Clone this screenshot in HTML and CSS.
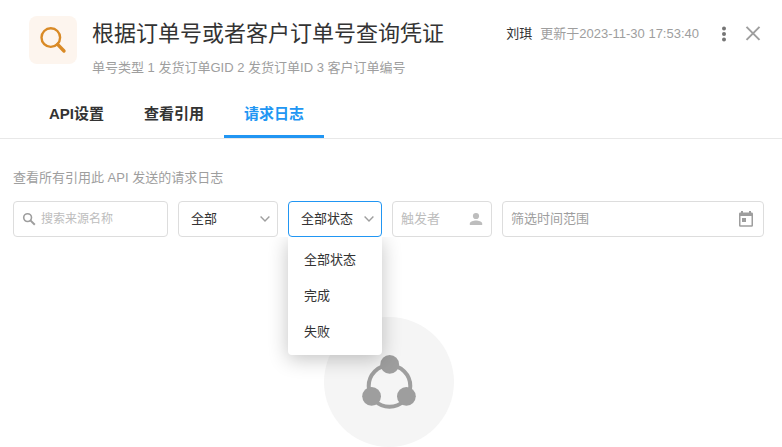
FILE: index.html
```html
<!DOCTYPE html>
<html lang="zh-CN">
<head>
    <meta charset="UTF-8">
    <meta name="viewport" content="width=device-width, initial-scale=1.0">
    <title>请求日志</title>
    <link rel="stylesheet" href="styles.css">
</head>
<body>
    <!-- Header -->
    <header class="header">
        <div class="api-icon">
            <svg viewBox="0 0 48 48" width="48" height="48" fill="none" stroke="#d98a26">
                <circle cx="21.8" cy="21.6" r="9.3" stroke-width="2.4"/>
                <path d="M28.6 28.4L35 35" stroke-width="3.4" stroke-linecap="round"/>
            </svg>
        </div>
        <div class="header-text">
            <h1 class="title">根据订单号或者客户订单号查询凭证</h1>
            <p class="subtitle">单号类型 1 发货订单GID 2 发货订单ID 3 客户订单编号</p>
        </div>
        <div class="header-meta">
            <span class="user">刘琪</span>
            <span class="updated">更新于2023-11-30 17:53:40</span>
            <button class="icon-button more" type="button" aria-label="更多">
                <svg viewBox="0 0 16 16" width="16" height="16" fill="#757575">
                    <circle cx="8" cy="2.4" r="2"/>
                    <circle cx="8" cy="8" r="2"/>
                    <circle cx="8" cy="13.6" r="2"/>
                </svg>
            </button>
            <button class="icon-button" type="button" aria-label="关闭">
                <svg viewBox="0 0 16 16" width="16" height="16" fill="none" stroke="#9e9e9e" stroke-width="2">
                    <path d="M1.5 0.9L14.5 13.9M14.5 0.9L1.5 13.9"/>
                </svg>
            </button>
        </div>
    </header>

    <!-- Tabs -->
    <nav class="tabs">
        <a class="tab" href="#settings">API设置</a>
        <a class="tab" href="#references">查看引用</a>
        <a class="tab active" href="#logs">请求日志</a>
    </nav>

    <main class="content">
        <p class="description">查看所有引用此 API 发送的请求日志</p>

        <!-- Filters -->
        <form class="filters">
            <label class="field search-field">
                <svg viewBox="0 0 14 14" width="14" height="14" fill="none" stroke="#9e9e9e">
                    <circle cx="5.6" cy="5.6" r="3.9" stroke-width="1.6"/>
                    <path d="M8.4 8.4L12.8 12.8" stroke-width="2"/>
                </svg>
                <input type="text" placeholder="搜索来源名称" aria-label="搜索来源名称">
            </label>
            <div class="field select-field">
                <select aria-label="类型">
                    <option>全部</option>
                </select>
                <svg viewBox="0 0 10 10" width="10" height="10" fill="none" stroke="#9e9e9e" stroke-width="1.4">
                    <path d="M0.6 2.6L5 7L9.4 2.6"/>
                </svg>
            </div>
            <div class="field select-field status-field">
                <select aria-label="状态">
                    <option>全部状态</option>
                    <option>完成</option>
                    <option>失败</option>
                </select>
                <svg viewBox="0 0 10 10" width="10" height="10" fill="none" stroke="#9e9e9e" stroke-width="1.4">
                    <path d="M0.6 2.6L5 7L9.4 2.6"/>
                </svg>
                <div class="menu">
                    <button class="menu-item" type="button">全部状态</button>
                    <button class="menu-item" type="button">完成</button>
                    <button class="menu-item" type="button">失败</button>
                </div>
            </div>
            <label class="field user-field">
                <input type="text" placeholder="触发者" aria-label="触发者">
                <svg viewBox="0 0 14 14" width="14" height="14" fill="#bdbdbd">
                    <circle cx="7" cy="4" r="3.1"/>
                    <path d="M0.8 13V11.4C0.8 9.4 4.6 8.4 7 8.4S13.2 9.4 13.2 11.4V13Z"/>
                </svg>
            </label>
            <label class="field date-field">
                <input type="text" placeholder="筛选时间范围" aria-label="筛选时间范围">
                <svg viewBox="0 0 16 16" width="16" height="16" fill="#9e9e9e">
                    <path fill-rule="evenodd" d="M3 0H5V1.4H11V0H13V1.4H13.6Q15 1.4 15 2.8V14.4Q15 15.8 13.6 15.8H2.4Q1 15.8 1 14.4V2.8Q1 1.4 2.4 1.4H3ZM2.5 5V14.3H13.5V5Z"/>
                    <rect x="4" y="7" width="4" height="4"/>
                </svg>
            </label>
        </form>

        <!-- Empty state -->
        <div class="empty-state">
            <svg viewBox="0 0 56 56" width="56" height="56" fill="#9e9e9e">
                <circle cx="28.5" cy="32" r="20.8" fill="none" stroke="#9e9e9e" stroke-width="4"/>
                <circle cx="28.7" cy="10.4" r="9.4"/>
                <circle cx="10.6" cy="42.3" r="9.4"/>
                <circle cx="45.4" cy="42.3" r="9.4"/>
            </svg>
        </div>
    </main>
</body>
</html>
```
FILE: styles.css
```css
/* Reset and base styles */
* {
    margin: 0;
    padding: 0;
    box-sizing: border-box;
}

body {
    font-family: "Liberation Sans", "Noto Sans CJK SC", sans-serif;
    font-size: 13px;
    line-height: 20px;
    color: #333;
    background: #fff;
}

svg {
    display: block;
    flex: none;
}

button, input, select {
    font: inherit;
    color: inherit;
    border: none;
    outline: none;
    background: none;
}

/* Header */
.header {
    display: flex;
    align-items: flex-start;
    padding: 16px 21px 0 29px;
}

.api-icon {
    flex: none;
    border-radius: 8px;
    background: #fdf5ee;
}

.header-text {
    flex: 1;
    margin-left: 15px;
    white-space: nowrap;
}

.title {
    font-size: 22px;
    font-weight: 400;
    line-height: 36px;
}

.subtitle {
    margin-top: 6px;
    color: #9e9e9e;
}

.header-meta {
    display: flex;
    align-items: center;
    height: 36px;
    white-space: nowrap;
}

.updated {
    margin-left: 8px;
    color: #9e9e9e;
}

.icon-button {
    margin-left: 13px;
    cursor: pointer;
}

.icon-button.more {
    margin-left: 17px;
}

/* Tabs */
.tabs {
    display: flex;
    padding-left: 29px;
    margin-top: 15px;
    border-bottom: 1px solid #e8e8e8;
}

.tab {
    padding: 0 20px;
    font-size: 15px;
    font-weight: 700;
    line-height: 42px;
    color: #333;
    text-decoration: none;
    border-bottom: 3px solid transparent;
}

.tab.active {
    color: #2196f3;
    border-bottom-color: #2196f3;
}

/* Content */
.content {
    padding: 29px 18px 0 13px;
}

.description {
    color: #9e9e9e;
}

/* Filters */
.filters {
    display: flex;
    gap: 10px;
    margin-top: 13px;
}

.field {
    position: relative;
    display: flex;
    align-items: center;
    flex: none;
    width: 100px;
    height: 36px;
    border: 1px solid #ddd;
    border-radius: 4px;
}

.field input {
    flex: 1;
    min-width: 0;
}

.field input::placeholder {
    color: #bdbdbd;
}

.search-field {
    width: 155px;
    padding: 0 8px;
    gap: 5px;
    font-size: 12px;
}

.select-field select {
    width: 100%;
    height: 100%;
    padding-left: 12px;
    appearance: none;
    cursor: pointer;
}

.select-field > svg {
    position: absolute;
    right: 7px;
    pointer-events: none;
}

.status-field {
    width: 94px;
    border-color: #2196f3;
}

.user-field {
    padding: 0 8px;
}

.date-field {
    flex: 1;
    padding: 0 9px 0 8px;
}

.date-field input::placeholder {
    color: #9e9e9e;
}

/* Dropdown menu */
.menu {
    position: absolute;
    z-index: 1;
    top: 100%;
    left: -1px;
    right: -1px;
    margin-top: 1px;
    padding: 5px 0;
    background: #fff;
    border-radius: 0 0 4px 4px;
    box-shadow: 0 4px 20px rgba(0, 0, 0, 0.24);
    clip-path: inset(0 -30px -40px -30px);
}

.menu-item {
    display: block;
    width: 100%;
    padding: 0 16px;
    line-height: 36px;
    text-align: left;
    cursor: pointer;
}

.menu-item:hover {
    background: #f5f5f5;
}

/* Empty state */
.empty-state {
    display: flex;
    align-items: center;
    justify-content: center;
    width: 130px;
    height: 130px;
    margin: 80px auto 0;
    border-radius: 50%;
    background: #f5f5f5;
}
```
